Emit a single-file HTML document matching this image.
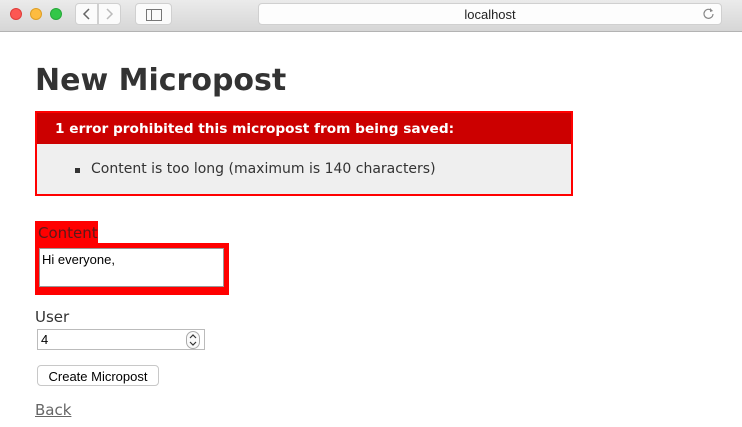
<!DOCTYPE html>
<html><head><meta charset="utf-8"><style>
*{box-sizing:border-box;margin:0;padding:0}
body{width:742px;height:427px;overflow:hidden;background:#fff;font-family:"DejaVu Sans",Verdana,sans-serif;color:#333;position:relative}
.a{position:absolute}
.l{font-family:"Liberation Sans",sans-serif}
.bar{left:0;top:0;width:742px;height:32px;background:linear-gradient(#ebebeb,#d6d6d6);border-bottom:1px solid #b3b3b3}
.dot{width:12px;height:12px;border-radius:50%;top:8px}
.btn{background:#fbfbfb;border:1px solid #d0d0d0;border-radius:4px;top:3px;height:22px}
</style></head><body>
<div class="a bar"></div>
<div class="a dot" style="left:10px;background:#fc5753;border:1px solid #df3d39"></div>
<div class="a dot" style="left:30px;background:#fdbc40;border:1px solid #de9f26"></div>
<div class="a dot" style="left:50px;background:#33c748;border:1px solid #27a83a"></div>
<div class="a btn" style="left:75px;width:23px;border-radius:4px 0 0 4px"></div>
<div class="a btn" style="left:98px;width:23px;border-radius:0 4px 4px 0"></div>
<svg class="a" style="left:75px;top:3px" width="46" height="22"><path d="M14 6l-5 5 5 5" stroke="#666" stroke-width="1.5" fill="none"/><path d="M32 6l5 5-5 5" stroke="#bbb" stroke-width="1.5" fill="none"/></svg>
<div class="a btn" style="left:135px;width:37px"></div>
<svg class="a" style="left:146px;top:9px" width="16" height="12"><rect x="0.5" y="0.5" width="15" height="11" fill="none" stroke="#777"/><line x1="5.5" y1="0" x2="5.5" y2="12" stroke="#777"/></svg>
<div class="a btn" style="left:258px;width:464px;background:#fdfdfd"></div>
<div class="a l" style="left:258px;top:7px;width:464px;text-align:center;font-size:13px;color:#222">localhost</div>
<svg class="a" style="left:702px;top:7px" width="13" height="13"><path d="M10 4A4.5 4.5 0 1 0 11 7" stroke="#888" stroke-width="1.2" fill="none"/><path d="M8 1l3 3-3 1z" fill="#888"/></svg>

<div class="a" style="left:35px;top:63px;font-size:30px;font-weight:bold">New Micropost</div>
<div class="a" style="left:35px;top:111px;width:538px;height:85px;border:2px solid #f00;background:#efefef">
<div style="background:#c00;color:#fff;font-weight:bold;font-size:13.7px;height:31px;padding:8px 0 0 18px">1 error prohibited this micropost from being saved:</div>
<div style="position:absolute;left:38px;top:55px;width:5px;height:5px;background:#333"></div>
<div style="position:absolute;left:54px;top:48px;font-size:14px">Content is too long (maximum is 140 characters)</div>
</div>
<div class="a" style="left:35px;top:221px;width:63px;height:22px;background:#f00;font-size:15px;padding:3px 0 0 3px;color:#5a1a1a">Content</div>
<div class="a" style="left:35px;top:243px;width:194px;height:52px;background:#f00"></div>
<div class="a l" style="left:39px;top:248px;width:185px;height:39px;background:#fff;border:1px solid #999;font-size:13px;color:#000;padding:3px 2px">Hi everyone,</div>
<div class="a" style="left:35px;top:308px;font-size:15px">User</div>
<div class="a l" style="left:37px;top:329px;width:168px;height:21px;border:1px solid #bbb;font-size:13px;color:#000;padding:2px 3px">4</div>
<div class="a" style="left:186px;top:331px;width:14px;height:18px;border:1px solid #aaa;border-radius:7px;background:#fafafa"></div>
<svg class="a" style="left:186px;top:331px" width="14" height="18"><path d="M4 7l3-3 3 3M4 11l3 3 3-3" stroke="#333" stroke-width="1.2" fill="none"/></svg>
<div class="a l" style="left:37px;top:365px;width:122px;height:21px;border:1px solid #c8c8c8;border-radius:4px;background:#fff;font-size:13px;color:#000;text-align:center;padding-top:3px">Create Micropost</div>
<div class="a" style="left:35px;top:401px;font-size:15px;color:#666;text-decoration:underline">Back</div>
</body></html>
